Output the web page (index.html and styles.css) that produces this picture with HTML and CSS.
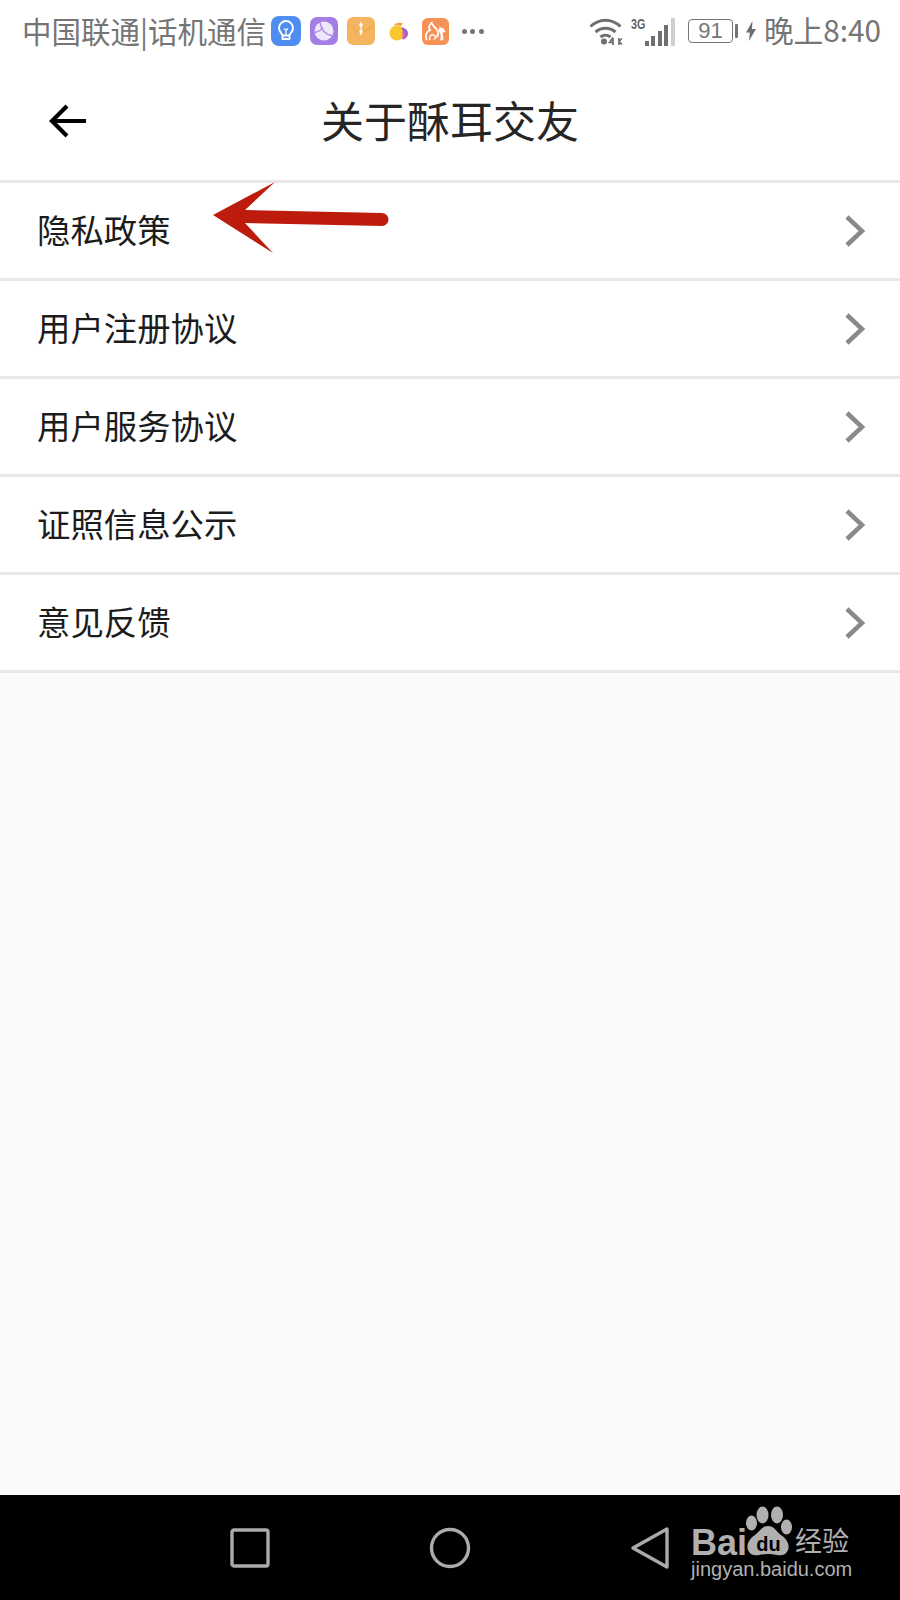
FILE: index.html
```html
<!DOCTYPE html>
<html lang="zh-CN">
<head>
<meta charset="utf-8">
<title>关于酥耳交友</title>
<link rel="stylesheet" href="styles.css">
</head>
<body>
<div class="page">
  <div class="status">
    <div class="status-left">
      <span class="carrier">中国联通|话机通信</span>
      <svg class="app a1" viewBox="0 0 30 30"><rect width="30" height="30" rx="8" fill="#4f8df0"/><path d="M11.500 19.500c0-2-3.500-3.500-3.500-7.500a7 7 0 0 1 14 0c0 4-3.500 5.500-3.500 7.500zM11.500 19.500v3.500h7v-3.500" fill="none" stroke="#fff" stroke-width="1.900" stroke-linejoin="round"/><path d="M13 12.500l2 2 2-2M15 14.500v5" fill="none" stroke="#fff" stroke-width="1.200"/></svg>
      <svg class="app a2" viewBox="0 0 28 28"><rect width="28" height="28" rx="7" fill="#a47ee6"/><circle cx="14" cy="14" r="9.500" fill="#eee6fb"/><path d="M10 5.500c1 6 4 12 12 13M4.800 15.500c3-.5 6-2 8-5" stroke="#a47ee6" stroke-width="1.300" fill="none"/></svg>
      <svg class="app a3" viewBox="0 0 28 28"><rect width="28" height="28" rx="6" fill="#f5b45f"/><path d="M1 8l13 9 13-9" stroke="#eda24a" stroke-width="1" fill="none"/><path d="M14 5v13" stroke="#fff" stroke-width="1.300"/><circle cx="14" cy="8" r="1.800" fill="#fff"/><circle cx="14" cy="15" r="1.800" fill="#fff"/></svg>
      <svg class="app a4" viewBox="0 0 20 20"><circle cx="8" cy="12" r="7.500" fill="#f8c72f"/><path d="M12 6.500c4 0 7 2.500 7 6 0 3.500-3 6-6 6 2-3 2-8-1-12z" fill="#a45fd0"/><path d="M13 11c1.500 0 3 1 3 3s-1.500 3-3 3c.8-2 .8-4 0-6z" fill="#e9609a"/><path d="M5 4.500c1-3 6-3.500 9-2-1 .8-1.500 1.500-2 2.500-2-.8-4-1-7-.5z" fill="#f2a03c"/></svg>
      <svg class="app a5" viewBox="0 0 28 28"><rect width="28" height="28" rx="6" fill="#f79257"/><path d="M5 23c-2.500-5-.5-9 3.500-10.500C6.500 10 7.500 7 10 5c0 2.500 3 3.500 5 6.500 2 3 2 6.500 0 8.500" fill="none" stroke="#fff" stroke-width="1.800"/><path d="M8 23c-1-4 2-7 5-5 2 1 1 4-1 4" fill="none" stroke="#fff" stroke-width="1.500"/><path d="M17 13.500l1.500-5 1.500 2 2-.5 1 2.500 1.500 1.500-3.500 1.500c1 2 1.500 4.500 1 7.500h-3.500c1.500-3.500 1.500-6.500-1.500-9.500z" fill="#fff"/></svg>
      <span class="dots"><i></i><i></i><i></i></span>
    </div>
    <div class="status-right">
      <svg class="wifi" viewBox="0 0 34 27"><path d="M1.500 8.500c9-8.500 21-8.500 30 0M6.500 14c6-5 14-5 20 0M11.500 19c3-2.500 7-2.500 10 0" fill="none" stroke="#6f6f6f" stroke-width="3"/><circle cx="15" cy="23.500" r="3" fill="#6f6f6f"/><path d="M24 19.500l-3.500 5h4.500M24 20v7M30 20v7M30 23.500l3-3M30 23.500l3 3" fill="none" stroke="#6f6f6f" stroke-width="1.700"/></svg>
      <div class="net">
        <span class="g3">3G</span>
        <span class="bars"><i class="b1"></i><i class="b2"></i><i class="b3"></i><i class="b4"></i><i class="b5"></i></span>
      </div>
      <span class="battery">91</span>
      <span class="nub"></span>
      <svg class="bolt" viewBox="0 0 10 20"><path d="M6.500 0L0 11.500h3.800L3 20l7-12H6z" fill="#6f6f6f"/></svg>
      <span class="clock">晚上8:40</span>
    </div>
  </div>

  <header class="head">
    <svg class="back" viewBox="0 0 40 36"><path d="M38 18H4M19 3L4 18l15 15" fill="none" stroke="#000" stroke-width="4.200"/></svg>
    <h1 class="title">关于酥耳交友</h1>
  </header>

  <main class="list">
    <div class="row"><span class="label">隐私政策</span><svg class="chev" viewBox="0 0 20 32"><path d="M2 2l15 14L2 30" fill="none" stroke="#8a8a8a" stroke-width="4.600"/></svg></div>
    <div class="row"><span class="label">用户注册协议</span><svg class="chev" viewBox="0 0 20 32"><path d="M2 2l15 14L2 30" fill="none" stroke="#8a8a8a" stroke-width="4.600"/></svg></div>
    <div class="row"><span class="label">用户服务协议</span><svg class="chev" viewBox="0 0 20 32"><path d="M2 2l15 14L2 30" fill="none" stroke="#8a8a8a" stroke-width="4.600"/></svg></div>
    <div class="row"><span class="label">证照信息公示</span><svg class="chev" viewBox="0 0 20 32"><path d="M2 2l15 14L2 30" fill="none" stroke="#8a8a8a" stroke-width="4.600"/></svg></div>
    <div class="row"><span class="label">意见反馈</span><svg class="chev" viewBox="0 0 20 32"><path d="M2 2l15 14L2 30" fill="none" stroke="#8a8a8a" stroke-width="4.600"/></svg></div>
  </main>

  <nav class="nav">
    <svg class="nav-icon" viewBox="0 0 44 44"><rect x="4" y="4" width="36" height="36" rx="2" fill="none" stroke="#ababab" stroke-width="3.400"/></svg>
    <svg class="nav-icon" viewBox="0 0 44 44"><circle cx="22" cy="22" r="18.500" fill="none" stroke="#ababab" stroke-width="3.400"/></svg>
    <svg class="nav-icon" viewBox="0 0 44 44"><path d="M5 22L39 3v38z" fill="none" stroke="#ababab" stroke-width="3.400" stroke-linejoin="round"/></svg>
  </nav>

  <svg class="annot" viewBox="0 0 182 78"><path d="M3 37L65 4 35 32l137 3a6.500 6.500 0 0 1 0 13L35 45l28 30z" fill="#bd1b0c"/></svg>

  <div class="wm">
    <div class="wm-top">
      <span class="wm-bai">Bai</span>
      <span class="wm-paw">
        <svg viewBox="0 0 47 54"><g fill="#b0b0b0"><ellipse cx="6.500" cy="20" rx="5.500" ry="7.500"/><ellipse cx="17.500" cy="12" rx="6" ry="8.500"/><ellipse cx="32" cy="12" rx="6" ry="8.500"/><ellipse cx="41.500" cy="24" rx="5.500" ry="7.500"/><path d="M23 23c-6 0-8 5-13 9-6 4-9 10-7 15 2 5 7 6 11 5 3-.5 6-1 9-1s6 .5 9 1c4 1 9 0 11-5 2-5-1-11-7-15-5-4-7-9-13-9z"/></g></svg>
        <span class="wm-du">du</span>
      </span>
      <span class="wm-cn">经验</span>
    </div>
    <div class="wm-url">jingyan.baidu.com</div>
  </div>
</div>
</body>
</html>
```

FILE: styles.css
```css
* { box-sizing: border-box; }
html, body { margin: 0; padding: 0; }
body { font-family: "Noto Sans CJK SC", "Noto Sans", sans-serif; background: #fafafa; }
.page { position: relative; width: 900px; height: 1600px; display: flex; flex-direction: column; overflow: hidden; }

.status { height: 62px; flex: none; background: #fff; display: flex; justify-content: space-between; align-items: center; padding: 0 19px 0 22px; color: #757575; }
.status-left, .status-right { display: flex; align-items: center; }
.carrier { font-size: 29.5px; line-height: 40px; margin-top: -3px; white-space: nowrap; }
.app { display: block; flex: none; }
.a1 { width: 30px; height: 30px; margin-left: 5px; }
.a2 { width: 28px; height: 28px; margin-left: 9px; }
.a3 { width: 28px; height: 28px; margin-left: 9px; }
.a4 { width: 20px; height: 20px; margin-left: 14px; }
.a5 { width: 27px; height: 27px; margin-left: 13px; }
.dots { display: flex; gap: 3.5px; margin-left: 13px; }
.dots i { display: block; width: 5px; height: 5px; border-radius: 50%; background: #757575; }

.wifi { width: 34px; height: 27px; display: block; }
.net { position: relative; width: 44px; height: 28px; margin-left: 8px; }
.g3 { position: absolute; left: 0; top: -1px; font: bold 15px/15px "Liberation Sans", sans-serif; color: #666; transform: scaleX(.72); transform-origin: left; }
.bars { position: absolute; left: 14px; bottom: -1px; display: flex; align-items: flex-end; gap: 2.400px; }
.bars i { display: block; width: 4px; background: #6f6f6f; }
.b1 { height: 5px; }
.b2 { height: 10px; }
.b3 { height: 15px; }
.b4 { height: 21px; }
.b5 { height: 28px; background: #cfcfcf !important; }
.battery { width: 45px; height: 24px; margin-left: 13px; border: 1.5px solid #757575; border-radius: 4px; font: 22px/21px "Liberation Sans", sans-serif; text-align: center; }
.nub { width: 3px; height: 14px; margin-left: 2px; background: #757575; border-radius: 1px; }
.bolt { width: 10px; height: 20px; margin-left: 8px; display: block; }
.clock { font-size: 29.7px; line-height: 40px; margin-left: 8px; margin-top: -3px; white-space: nowrap; }

.head { height: 121px; flex: none; background: #fff; display: flex; align-items: center; justify-content: center; position: relative; border-bottom: 3px solid #e8e8e8; }
.back { position: absolute; left: 48px; top: 41px; width: 40px; height: 36px; }
.title { margin: 0; font-size: 43px; line-height: 60px; font-weight: 400; color: #262626; position: relative; top: -2px; }

.list { flex: 1; background: #fafafa; }
.row { height: 98px; background: #fff; border-bottom: 3px solid #e8e8e8; display: flex; align-items: center; justify-content: space-between; padding: 0 35px 0 37px; }
.label { font-size: 33.4px; line-height: 46px; margin-top: -3px; color: #1c1c1c; }
.chev { width: 20px; height: 32px; display: block; }

.nav { height: 105px; flex: none; background: #000; display: grid; grid-template-columns: repeat(3, 200px); justify-content: center; justify-items: center; align-items: center; }
.nav-icon { width: 44px; height: 44px; display: block; }

.annot { position: absolute; left: 210px; top: 178px; width: 182px; height: 78px; }

.wm { position: absolute; left: 691px; top: 1503px; width: 165px; color: #b0b0b0; }
.wm-top { display: flex; align-items: flex-end; height: 54px; }
.wm-bai { font: bold 36px/26px "Liberation Sans", sans-serif; margin-bottom: 1.5px; }
.wm-paw { position: relative; width: 47px; height: 54px; margin-left: -2px; flex: none; }
.wm-paw svg { display: block; width: 47px; height: 54px; }
.wm-du { position: absolute; left: 0; right: 0; bottom: 3px; text-align: center; font: bold 20px/20px "Liberation Sans", sans-serif; color: #000; }
.wm-cn { font-size: 27px; line-height: 30px; margin-left: 3px; margin-bottom: 2px; white-space: nowrap; }
.wm-url { font: 20px/22px "Liberation Sans", sans-serif; margin-top: 1px; white-space: nowrap; }
```
